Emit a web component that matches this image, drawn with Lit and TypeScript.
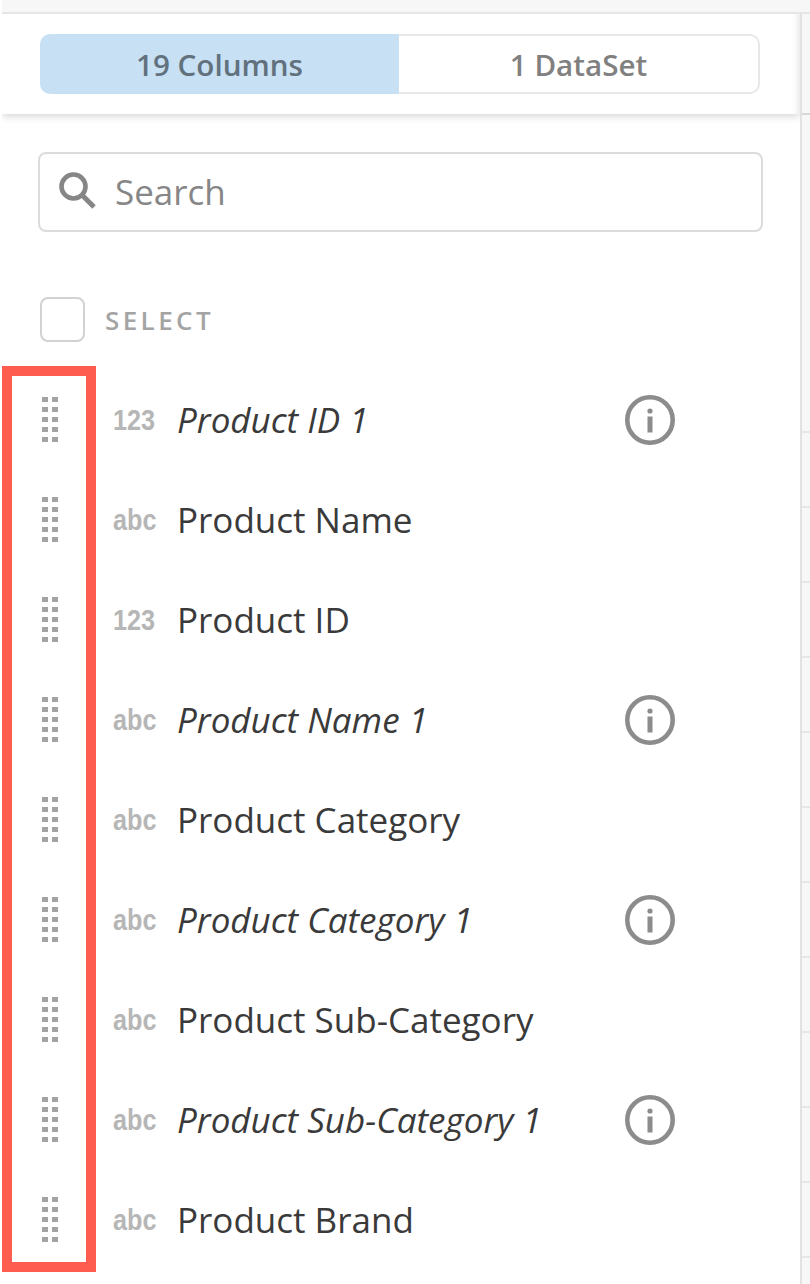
import { LitElement, html, css, svg } from "lit";
import { customElement } from "lit/decorators.js";

const columns = [
  { type: "123", name: "Product ID 1", calc: true },
  { type: "abc", name: "Product Name", calc: false },
  { type: "123", name: "Product ID", calc: false },
  { type: "abc", name: "Product Name 1", calc: true },
  { type: "abc", name: "Product Category", calc: false },
  { type: "abc", name: "Product Category 1", calc: true },
  { type: "abc", name: "Product Sub-Category", calc: false },
  { type: "abc", name: "Product Sub-Category 1", calc: true },
  { type: "abc", name: "Product Brand", calc: false },
];

const grip = html`<svg class="grip" width="18" height="46" viewBox="0 0 18 46">
  ${[0, 10, 20, 30, 40].map(
    (y) => svg`<rect x="0" y=${y} width="6" height="5"></rect><rect x="10" y=${y} width="6" height="5"></rect>`
  )}
</svg>`;

const info = html`<svg class="info" width="50" height="50" viewBox="0 0 50 50">
  <circle cx="25" cy="25" r="22.7" fill="none" stroke="#8c8c8c" stroke-width="4.6"></circle>
  <circle cx="25" cy="16" r="2.6" fill="#8c8c8c"></circle>
  <rect x="22.5" y="21.5" width="5" height="16" fill="#8c8c8c"></rect>
</svg>`;

@customElement("app-root")
export class AppRoot extends LitElement {
  static styles = css`
    :host {
      display: block;
      width: 810px;
      height: 1284px;
      overflow: hidden;
      background: #fff;
      font-family: "Open Sans", "Noto Sans", sans-serif;
    }
    .top {
      height: 12px;
      margin-left: 2px;
      background: #f7f7f7;
      border-bottom: 2px solid #e6e6e6;
    }
    .body {
      display: flex;
      padding-left: 2px;
      height: 1270px;
    }
    .main {
      position: relative;
      width: 798px;
      flex: none;
    }
    .head {
      height: 100px;
      box-sizing: border-box;
      padding: 20px 0 0 38px;
      box-shadow: 0 2px 8px rgba(0, 0, 0, 0.18), inset -7px 0 6px -5px rgba(0, 0, 0, 0.1);
      clip-path: inset(0 0 -20px 0);
    }
    .segment {
      display: flex;
      width: 720px;
      height: 60px;
    }
    .seg {
      flex: 1;
      display: flex;
      align-items: center;
      justify-content: center;
      box-sizing: border-box;
      font-size: 29.6px;
      font-weight: 600;
      color: #808080;
    }
    .seg.on {
      background: #c8e0f3;
      color: #62717e;
      border-radius: 10px 0 0 10px;
    }
    .seg.off {
      border: 2px solid #e8e8e8;
      border-left: none;
      border-radius: 0 10px 10px 0;
    }
    .search {
      display: flex;
      align-items: center;
      gap: 17px;
      box-sizing: border-box;
      width: 725px;
      height: 80px;
      margin: 38px 0 0 36px;
      padding: 0 0 2px 18px;
      border: 2px solid #dcdcdc;
      border-radius: 8px;
      font-size: 35px;
      color: #868686;
    }
    .select {
      display: flex;
      align-items: center;
      gap: 20px;
      margin: 65px 0 0 38px;
      height: 45px;
    }
    .box {
      width: 45px;
      height: 45px;
      box-sizing: border-box;
      border: 2px solid #d2d2d2;
      border-radius: 8px;
    }
    .select span {
      font-size: 26px;
      font-weight: 600;
      letter-spacing: 3.4px;
      color: #a4a4a4;
    }
    .list {
      position: relative;
      margin-top: 28px;
    }
    .row {
      display: flex;
      align-items: center;
      height: 100px;
      padding-left: 40px;
    }
    .grip {
      flex: none;
      fill: #a3a3a3;
    }
    .type {
      flex: none;
      width: 44px;
      margin: 0 21px 0 53px;
      font-family: "Liberation Sans", sans-serif;
      font-size: 29px;
      font-weight: 700;
      line-height: 30px;
      color: #b6b6b6;
      white-space: nowrap;
      transform: scaleX(0.87);
      transform-origin: left center;
    }
    .name {
      flex: none;
      width: 447px;
      padding-bottom: 2px;
      font-size: 35px;
      color: #3a3a3a;
      white-space: nowrap;
      margin-left: -1px;
      margin-right: 1px;
    }
    .name.calc {
      font-style: italic;
    }
    .info {
      flex: none;
    }
    .marker {
      position: absolute;
      left: 0;
      top: -4px;
      width: 94px;
      height: 906px;
      box-sizing: border-box;
      border: 10px solid #ff5c50;
    }
    .panel {
      flex: 1;
      border-left: 2px solid #e2e2e2;
      background: #f7f7f7;
    }
    .cell {
      box-sizing: border-box;
      height: 75px;
      border-bottom: 2px solid #e6e6e6;
    }
    .cell.first {
      height: 101px;
      border-bottom-color: #d8d8d8;
    }
    .cell.second {
      height: 318px;
    }
  `;

  render() {
    return html`
      <div class="top"></div>
      <div class="body">
        <div class="main">
          <div class="head">
            <div class="segment">
              <div class="seg on">19 Columns</div>
              <div class="seg off">1 DataSet</div>
            </div>
          </div>
          <div class="search">
            <svg width="40" height="40" viewBox="0 0 40 40">
              <circle cx="15.5" cy="15.5" r="12" fill="none" stroke="#868686" stroke-width="4.6"></circle>
              <path d="M24 24 L36 36" stroke="#868686" stroke-width="5" fill="none"></path>
            </svg>
            Search
          </div>
          <div class="select">
            <div class="box"></div>
            <span>SELECT</span>
          </div>
          <div class="list">
            ${columns.map(
              (c) => html`<div class="row">
                ${grip}
                <span class="type">${c.type}</span>
                <span class="name ${c.calc ? "calc" : ""}">${c.name}</span>
                ${c.calc ? info : ""}
              </div>`
            )}
            <div class="marker"></div>
          </div>
        </div>
        <div class="panel">
          <div class="cell first"></div>
          <div class="cell second"></div>
          ${Array.from({ length: 11 }).map(() => html`<div class="cell"></div>`)}
        </div>
      </div>
    `;
  }
}
